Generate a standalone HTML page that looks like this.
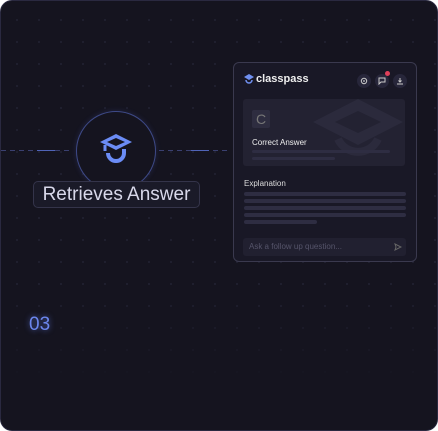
<!DOCTYPE html>
<html><head><style>
html,body{margin:0;padding:0;background:#fff;}
.wrap{position:relative;width:438px;height:431px;overflow:hidden;border-radius:12px;background:#15141f;border:1px solid #2a2940;box-sizing:border-box;font-family:"Liberation Sans",sans-serif;
background-image:radial-gradient(circle,#242436 0.7px,transparent 1.1px);background-size:22px 22px;background-position:5px 8px;}
.fade{position:absolute;left:0;right:0;bottom:0;height:140px;background:linear-gradient(transparent,#15141f 70%);}
.line{position:absolute;top:149px;height:1px;}
.circle{position:absolute;left:75px;top:110px;width:80px;height:80px;border-radius:50%;border:1px solid #3e4a88;box-sizing:border-box;background:#15141f;box-shadow:0 0 6px rgba(90,110,220,.2);}
.label{position:absolute;left:32px;top:180px;width:167px;height:27px;border:1px solid #34344a;border-radius:5px;background:#1a1a28;color:#d8d8ea;font-size:19px;line-height:26px;text-align:center;box-sizing:border-box;}
.num{position:absolute;left:28px;top:313px;color:#6b86ee;font-size:19px;text-shadow:0 0 6px rgba(100,130,240,.7);}
.card{position:absolute;left:232px;top:61px;width:184px;height:200px;border:1px solid #3a394e;border-radius:6px;background:#191826;box-sizing:border-box;}
.ib{position:absolute;top:11px;width:14px;height:14px;border-radius:50%;background:#27263a;}
.ib svg{position:absolute;left:3px;top:3px}
.bar{position:absolute;height:4px;border-radius:2px;background:#2e2d42;}
</style></head><body><div class="wrap">
<div class="fade"></div>
<div class="line" style="left:0;width:72px;background:repeating-linear-gradient(90deg,#3a4070 0 5px,transparent 5px 9px)"></div>
<div class="line" style="left:36px;width:18px;background:#5064b8"></div>
<div class="line" style="left:158px;width:70px;background:repeating-linear-gradient(90deg,#3a4070 0 5px,transparent 5px 9px)"></div>
<div class="line" style="left:190px;width:18px;background:#5064b8"></div>
<div class="circle"></div>
<svg style="position:absolute;left:95px;top:131px" width="40" height="40" viewBox="0 0 40 40">
<path d="M20 2 L36 10 L20 18 L4 10 Z" fill="#6b8cf5"/><path d="M20 6 L29 10 L20 14 L11 10Z" fill="#15141f"/>
<path d="M9 13 V19" stroke="#6b8cf5" stroke-width="3"/>
<path d="M12 21 A8 8 0 0 0 28 21 V17" stroke="#6b8cf5" stroke-width="4" fill="none"/>
</svg>
<div class="label">Retrieves Answer</div>
<div class="num">03</div>
<div class="card">
<svg style="position:absolute;left:10px;top:11px" width="10" height="10" viewBox="0 0 10 10"><path d="M5 0L10 3L5 6L0 3Z" fill="#7090f0"/><path d="M2 6a3 3 0 0 0 6 0" stroke="#7090f0" stroke-width="1.5" fill="none"/></svg>
<div style="position:absolute;left:22px;top:10px;color:#eee;font-size:11px;font-weight:bold">classpass</div>
<div class="ib" style="left:123px"><svg width="8" height="8" viewBox="0 0 8 8"><circle cx="4" cy="4" r="2.7" stroke="#ccc" stroke-width="1" fill="none"/><circle cx="4" cy="4" r="0.9" fill="#ccc"/></svg></div>
<div class="ib" style="left:141px"><svg width="8" height="8" viewBox="0 0 8 8"><path d="M1 1H7V5H3L1 7Z" stroke="#ccc" stroke-width="1" fill="none"/></svg></div>
<div class="ib" style="left:159px"><svg width="8" height="8" viewBox="0 0 8 8"><path d="M4 1V5M2.5 3.5L4 5L5.5 3.5M1 7H7" stroke="#ccc" stroke-width="1" fill="none"/></svg></div>
<div style="position:absolute;left:151px;top:8px;width:5px;height:5px;border-radius:50%;background:#e0405a"></div>
<div style="position:absolute;left:9px;top:36px;width:162px;height:67px;border-radius:3px;background:#232232;overflow:hidden">
<svg style="position:absolute;left:70px;top:0" width="95" height="67" viewBox="0 0 95 67"><path d="M45 0 L90 23 L45 46 L0 23Z" fill="#2b2a3c"/><path d="M45 12 L68 23 L45 34 L22 23Z" fill="#232232"/><path d="M25 40 A22 22 0 0 0 65 40" stroke="#2b2a3c" stroke-width="8" fill="none"/></svg>
<div style="position:absolute;left:9px;top:11px;width:18px;height:18px;background:#2e2d40;border-radius:2px;color:#777;font-size:14px;text-align:center;line-height:18px">C</div>
<div style="position:absolute;left:9px;top:39px;color:#eee;font-size:8px">Correct Answer</div>
<div class="bar" style="left:9px;top:51px;width:138px;height:3px"></div>
<div class="bar" style="left:9px;top:58px;width:83px;height:3px"></div>
</div>
<div style="position:absolute;left:10px;top:116px;color:#ddd;font-size:8px">Explanation</div>
<div class="bar" style="left:10px;top:129px;width:162px"></div>
<div class="bar" style="left:10px;top:136px;width:162px"></div>
<div class="bar" style="left:10px;top:143px;width:162px"></div>
<div class="bar" style="left:10px;top:150px;width:162px"></div>
<div class="bar" style="left:10px;top:157px;width:73px"></div>
<div style="position:absolute;left:9px;top:175px;width:163px;height:18px;background:#212030;border-radius:3px;color:#55546a;font-size:8px;line-height:18px;padding-left:6px;box-sizing:border-box">Ask a follow up question...</div>
<svg style="position:absolute;left:160px;top:180px" width="8" height="8" viewBox="0 0 8 8"><path d="M1 1L7 4L1 7L2 4Z" stroke="#666" stroke-width="1" fill="none"/></svg>
</div>
</div></body></html>
